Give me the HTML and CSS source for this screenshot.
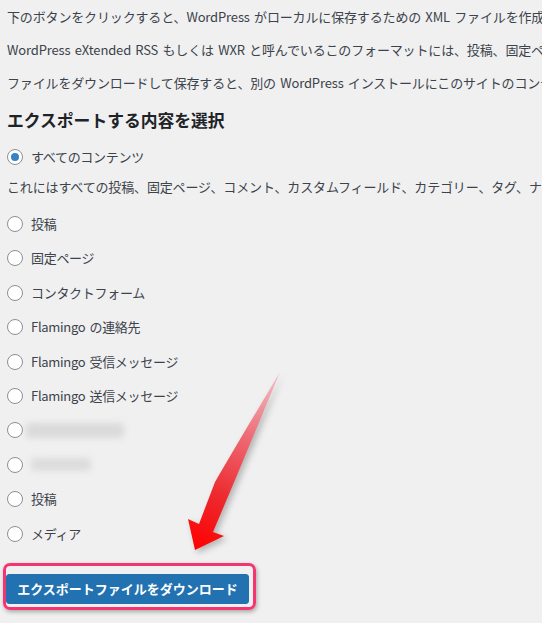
FILE: index.html
```html
<!DOCTYPE html>
<html lang="ja">
<head>
<meta charset="utf-8">
<title>エクスポート</title>
<link rel="stylesheet" href="styles.css">
</head>
<body>
<div class="wrap">
  <p class="intro">下のボタンをクリックすると、WordPress がローカルに保存するための XML ファイルを作成します。</p>
  <p class="intro">WordPress eXtended RSS もしくは WXR と呼んでいるこのフォーマットには、投稿、固定ページ、コメント、カスタムフィールド、カテゴリー、タグが含まれます。</p>
  <p class="intro">ファイルをダウンロードして保存すると、別の WordPress インストールにこのサイトのコンテンツをインポートできます。</p>
  <h2 class="title">エクスポートする内容を選択</h2>
  <label class="opt"><span class="radio checked"></span>すべてのコンテンツ</label>
  <p class="desc">これにはすべての投稿、固定ページ、コメント、カスタムフィールド、カテゴリー、タグ、ナビゲーションメニュー、カスタム投稿が含まれます。</p>
  <ul class="opts">
    <li class="opt"><span class="radio"></span>投稿</li>
    <li class="opt"><span class="radio"></span>固定ページ</li>
    <li class="opt"><span class="radio"></span>コンタクトフォーム</li>
    <li class="opt"><span class="radio"></span>Flamingo の連絡先</li>
    <li class="opt"><span class="radio"></span>Flamingo 受信メッセージ</li>
    <li class="opt"><span class="radio"></span>Flamingo 送信メッセージ</li>
    <li class="opt"><span class="radio"></span><span class="blur blur-a"></span></li>
    <li class="opt"><span class="radio"></span><span class="blur blur-b"></span></li>
    <li class="opt"><span class="radio"></span>投稿</li>
    <li class="opt"><span class="radio"></span>メディア</li>
  </ul>
  <div class="submit">
    <button class="btn" type="button">エクスポートファイルをダウンロード</button>
  </div>
</div>
<div class="highlight"></div>
<svg class="arrow" width="542" height="623" viewBox="0 0 542 623">
  <defs>
    <linearGradient id="ag" x1="280" y1="372" x2="195" y2="550" gradientUnits="userSpaceOnUse">
      <stop offset="0" stop-color="#f4a0a8" stop-opacity="0.6"/>
      <stop offset="0.35" stop-color="#ee6e78"/>
      <stop offset="0.7" stop-color="#ec2a2e"/>
      <stop offset="1" stop-color="#ff0000"/>
    </linearGradient>
  </defs>
  <path d="M280,372 Q236,446 215,482 L199,524 L188,519 L195,550 L224,536 L213,532 L235,480 Z" fill="url(#ag)"/>
</svg>
</body>
</html>
```
FILE: styles.css
```css
html, body {
  margin: 0;
  padding: 0;
  background: #f0f0f1;
  overflow: hidden;
}
body {
  width: 542px;
  height: 623px;
  position: relative;
  font-family: "Noto Sans CJK JP", "Noto Sans", sans-serif;
  font-size: 13px;
  color: #3c434a;
}
.wrap {
  display: flex;
  flex-direction: column;
  padding: 7px 0 0 7px;
  white-space: nowrap;
}
.intro {
  margin: 0 0 13px;
  line-height: 20px;
  letter-spacing: -0.15px;
  word-spacing: 1.5px;
}
.title {
  margin: 2px 0 15px;
  font-size: 16.8px;
  line-height: 24px;
  font-weight: 700;
  color: #1d2327;
  letter-spacing: 0;
}
.opt {
  display: flex;
  align-items: center;
  height: 20px;
  line-height: 20px;
  letter-spacing: -0.3px;
  word-spacing: 1.5px;
  white-space: pre;
}
.radio {
  width: 14px;
  height: 14px;
  border: 1px solid #8c8f94;
  border-radius: 50%;
  background: #fff;
  margin-right: 8px;
  flex: none;
  display: flex;
  align-items: center;
  justify-content: center;
}
.radio.checked::after {
  content: "";
  width: 8px;
  height: 8px;
  border-radius: 50%;
  background: #3582c4;
}
.desc {
  margin: 10px 0 0;
  line-height: 20px;
  letter-spacing: -0.15px;
}
.opts {
  list-style: none;
  margin: 17px 0 0;
  padding: 0;
  display: flex;
  flex-direction: column;
  gap: 14.4px;
}
.blur {
  display: block;
  border-radius: 4px;
  filter: blur(3px);
}
.blur-a {
  width: 98px;
  height: 15px;
  margin-left: -5px;
  background: #dadada;
}
.blur-b {
  width: 60px;
  height: 13px;
  margin-left: 0;
  background: #dcdcdc;
}
.submit {
  margin-top: 30px;
}
.btn {
  margin-left: -1px;
  width: 243px;
  height: 30px;
  padding: 0;
  border: 1px solid #2271b1;
  border-radius: 3px;
  background: #2271b1;
  color: #fff;
  font-family: "Noto Sans CJK JP", sans-serif;
  font-size: 13px;
  font-weight: 700;
  letter-spacing: 0;
}
.highlight {
  position: absolute;
  left: 3px;
  top: 563px;
  width: 247px;
  height: 41px;
  border: 3.5px solid #f5356f;
  border-radius: 7px;
  box-shadow: 1px 2px 4px rgba(0, 0, 0, 0.3);
  pointer-events: none;
}
.arrow {
  position: absolute;
  left: 0;
  top: 0;
  pointer-events: none;
  filter: drop-shadow(3px 3px 3px rgba(0, 0, 0, 0.25));
}
```
